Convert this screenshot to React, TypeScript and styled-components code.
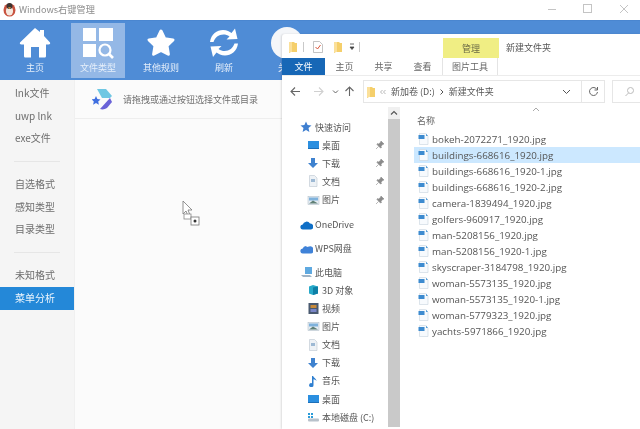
import { FC, ReactNode } from 'react'
import styled, { createGlobalStyle } from 'styled-components'

const FONT = '"Noto Sans CJK SC", "Noto Sans", sans-serif'

const GlobalStyle = createGlobalStyle`
  html, body {
    margin: 0;
    padding: 0;
    background: #fff;
    overflow: hidden;
  }
  body {
    font-family: ${FONT};
  }
`

const Page = styled.div`
  position: relative;
  width: 640px;
  height: 429px;
  overflow: hidden;
  display: flex;
  flex-direction: column;
  background: #fbfbfb;
  filter: blur(0.45px);
`

/* title bar */
const TitleBar = styled.header`
  height: 20px;
  flex: none;
  display: flex;
  align-items: center;
  padding: 0 11px 2px 3px;
  box-sizing: border-box;
  background: #fff;
`

const TitleText = styled.span`
  margin-left: 3px;
  font-size: 9.2px;
  color: #8c8c8c;
  flex: 1;
`

const WindowControls = styled.div`
  display: flex;
  align-items: center;
  gap: 26px;
`

/* blue toolbar */
const Toolbar = styled.nav`
  height: 60px;
  flex: none;
  display: flex;
  gap: 9px;
  padding: 2px 0 0 8px;
  box-sizing: border-box;
  background: #4f8cd6;
  border-top: 1px solid #4a86d0;
`

const ToolButton = styled.div<{ $active?: boolean }>`
  width: 54px;
  height: 55px;
  display: flex;
  flex-direction: column;
  align-items: center;
  justify-content: flex-end;
  gap: 1px;
  padding-bottom: 2px;
  box-sizing: border-box;
  font-size: 9px;
  line-height: 16px;
  color: #e6effa;
  background: ${p => (p.$active ? '#94b8e6' : 'transparent')};
`

const IconSlot = styled.div`
  height: 33px;
  display: flex;
  align-items: center;
  justify-content: center;
`

const RoundIcon = styled.div`
  width: 32px;
  height: 32px;
  border-radius: 50%;
  background: #f4f6f9;
`

const Body = styled.div`
  flex: 1;
  display: flex;
  min-height: 0;
`

/* left menu */
const Sidebar = styled.aside`
  width: 74px;
  flex: none;
  padding-top: 2px;
  box-sizing: border-box;
  background: #f5f5f5;
`

const SideItem = styled.div<{ $active?: boolean }>`
  height: 22.7px;
  line-height: 22.7px;
  padding-left: 15px;
  font-size: 10px;
  color: ${p => (p.$active ? '#eef6fd' : '#6e6e6e')};
  background: ${p => (p.$active ? '#2488d8' : 'transparent')};
`

const SideDivider = styled.div`
  height: 1px;
  margin: 11px 14px 11px 14px;
  background: #e6e6e6;
`

const Content = styled.main`
  flex: 1;
  position: relative;
  border-left: 1px solid #f0f0f0;
`

const DropHint = styled.div`
  height: 38px;
  display: flex;
  align-items: center;
  gap: 10px;
  padding-left: 17px;
  border-bottom: 1px solid #eeeeee;
  font-size: 9px;
  color: #6f6f6f;
`

const DragCursor = styled.svg`
  position: absolute;
  left: 107px;
  top: 120px;
`

/* explorer window lying over the app */
const Explorer = styled.section`
  position: absolute;
  left: 282px;
  top: 34px;
  right: 0;
  bottom: 0;
  display: flex;
  flex-direction: column;
  background: #fff;
  box-shadow: -1px 0 2px rgba(0, 0, 0, 0.12);
  border-radius: 3px 0 0 0;
`

const QuickBar = styled.div`
  height: 24px;
  flex: none;
  display: flex;
  align-items: center;
  padding: 2px 0 0 7px;
  box-sizing: border-box;
`

const QuickSep = styled.span<{ $left: number; $right: number }>`
  width: 1px;
  height: 10px;
  margin: 0 ${p => p.$right}px 0 ${p => p.$left}px;
  background: #c9c9c9;
`

const QuickGap = styled.span<{ $width: number }>`
  width: ${p => p.$width}px;
  flex: none;
`

const ManageTab = styled.div`
  width: 56px;
  height: 20px;
  margin-left: 83px;
  align-self: flex-end;
  display: flex;
  align-items: center;
  justify-content: center;
  background: #f0ee84;
  font-size: 9px;
  color: #6a6a45;
`

const WindowName = styled.span`
  margin-left: 7px;
  font-size: 9px;
  color: #555;
`

const RibbonTabs = styled.div`
  height: 17px;
  flex: none;
  display: flex;
  border-bottom: 1px solid #ececec;
  font-size: 9px;
  color: #666;
`

const RibbonTab = styled.div<{ $width: number; $kind?: 'file' | 'tool' }>`
  width: ${p => p.$width}px;
  display: flex;
  align-items: center;
  justify-content: center;
  color: ${p => (p.$kind === 'file' ? '#fff' : '#666')};
  background: ${p => (p.$kind === 'file' ? '#1767b6' : 'transparent')};
  border-left: ${p => (p.$kind === 'tool' ? '1px solid #e4e4e4' : 'none')};
  border-right: ${p => (p.$kind === 'tool' ? '1px solid #e4e4e4' : 'none')};
  box-sizing: border-box;
`

const AddressRow = styled.div`
  height: 31px;
  flex: none;
  display: flex;
  align-items: center;
  padding-left: 8px;
`

const NavGlyphs = styled.div`
  width: 73px;
  flex: none;
  display: flex;
  align-items: center;
`

const AddressBox = styled.div`
  width: 219px;
  height: 23px;
  flex: none;
  display: flex;
  align-items: center;
  gap: 4px;
  padding: 0 10px 0 3px;
  box-sizing: border-box;
  border: 1px solid #e6e6e6;
  font-size: 9px;
  color: #555;
`

const CrumbLast = styled.span`
  flex: 1;
`

const RefreshBox = styled.div`
  width: 23px;
  height: 23px;
  flex: none;
  display: flex;
  align-items: center;
  justify-content: center;
  box-sizing: border-box;
  border: 1px solid #e6e6e6;
  border-left: none;
`

const SearchBox = styled.div`
  flex: 1;
  height: 23px;
  margin-left: 7px;
  display: flex;
  align-items: center;
  padding-left: 11px;
  box-sizing: border-box;
  border: 1px solid #e6e6e6;
  border-right: none;
`

const Panes = styled.div`
  flex: 1;
  display: flex;
  min-height: 0;
`

const NavPane = styled.div`
  width: 106px;
  flex: none;
  padding-top: 11px;
  font-size: 9px;
  color: #555;
`

const NavRow = styled.div<{ $indent: number; $gap?: number }>`
  height: 18.15px;
  margin-top: ${p => p.$gap ?? 0}px;
  display: flex;
  align-items: center;
  gap: 2px;
  padding-left: ${p => p.$indent}px;
  white-space: nowrap;
`

const NavLabel = styled.span`
  flex: 1;
`

const PinSlot = styled.span`
  width: 13px;
  display: flex;
`

const Scrollbar = styled.div`
  width: 12px;
  flex: none;
  margin-bottom: 2px;
  background: #c9c9c9;
`

const ScrollUp = styled.div`
  height: 12px;
  display: flex;
  align-items: center;
  justify-content: center;
  background: #f0f0f0;
`

const ListPane = styled.div`
  flex: 1;
  position: relative;
  min-width: 0;
`

const SortMark = styled.svg`
  position: absolute;
  left: 132px;
  top: 0;
`

const ColumnHead = styled.div`
  height: 24px;
  padding: 2px 0 0 17px;
  display: flex;
  align-items: center;
  box-sizing: border-box;
  font-size: 9px;
  color: #666;
`

const FileRow = styled.div<{ $selected?: boolean }>`
  height: 16px;
  margin-left: 14px;
  display: flex;
  align-items: center;
  gap: 3px;
  padding-left: 4px;
  font-family: 'Open Sans', sans-serif;
  font-size: 9.8px;
  color: #555;
  white-space: nowrap;
  background: ${p => (p.$selected ? '#cce8ff' : 'transparent')};
`

/* drawings */
const AppLogo: FC = () => (
  <svg width="13" height="15" viewBox="0 0 13 15">
    <ellipse cx="6.5" cy="8" rx="6" ry="6.6" fill="#c8523f" />
    <ellipse cx="6.5" cy="9" rx="3.6" ry="4.6" fill="#f6e9df" />
    <circle cx="6.5" cy="4" r="3" fill="#3b3330" />
    <path d="M5 5.2h3L6.5 7z" fill="#e6a23c" />
  </svg>
)

const HomeIcon: FC = () => (
  <svg width="32" height="32" viewBox="0 0 32 32" fill="#fff">
    <path d="M16 1 1 15.5c-.6 1 .2 2 1.500 2H5V29c0 1 .7 1.500 1.500 1.500H12V20h8v10.500h5.500c.8 0 1.500-.5 1.500-1.500V17.500h2.500c1.300 0 2.100-1 1.500-2L25 9V3h-4v2z" />
  </svg>
)

const TypeIcon: FC = () => (
  <svg width="32" height="32" viewBox="0 0 32 32" fill="#fff">
    <rect x="1" y="1" width="13" height="13" />
    <rect x="17" y="1" width="14" height="13" />
    <rect x="1" y="17" width="13" height="13" />
    <circle cx="23" cy="23" r="5.500" fill="none" stroke="#fff" strokeWidth="2.200" />
    <path d="m27 27 4 4" stroke="#fff" strokeWidth="2.600" />
  </svg>
)

const StarIcon: FC = () => (
  <svg width="30" height="30" viewBox="0 0 30 30" fill="#fff" stroke="#fff" strokeWidth="3" strokeLinejoin="round">
    <path d="m15 3 3.700 7.700 8.300 1.200-6 5.900 1.400 8.400L15 22.300 7.600 26.200 9 17.800l-6-5.900 8.300-1.200z" />
  </svg>
)

const RefreshIcon: FC = () => (
  <svg width="30" height="32" viewBox="0 0 30 32" fill="#fff">
    <path d="M1 15C2 7 8 3 14 3c4 0 6.500 1.500 8.500 3L26 1.500 28.500 12 17.500 12.500 20.500 9.500C18.500 8 16.500 7.500 14.500 7.500 9.500 7.500 6 10.500 4.500 15z" />
    <path d="M29 16.500C28 24.500 22 28.500 16 28.500c-4 0-6.500-1.500-8.500-3L4 30 1.500 19.500 12.500 19 9.500 22c2 1.500 4 2 6 2 5 0 8.500-3 10-7.500z" />
  </svg>
)

const DropLogo: FC = () => (
  <svg width="21" height="22" viewBox="0 0 21 22">
    <path d="M5 1h9l6 7-2 2H10z" fill="#6fc7e3" />
    <path d="M18 10 8 21c3 1 5 0 7-1l5-6z" fill="#6a63d8" />
    <path d="M4 8l1.400 3 3.100.4-2.300 2.100.7 3.200L4 15.100 1.100 16.700l.7-3.200L-.5 11.400l3.100-.4z" fill="#3f6fe0" />
  </svg>
)

const Folder: FC = () => (
  <svg width="8" height="12" viewBox="0 0 8 12">
    <path d="M0 1h5l1 1h2v9H2L0 12z" fill="#f5cf6b" />
    <path d="M0 1h3v10H0z" fill="#fbe09a" />
  </svg>
)

const SmallSvg = styled.svg`
  flex: none;
`

const Small: FC<{ children: ReactNode; w?: number; h?: number }> = ({ children, w = 12, h = 12 }) => (
  <SmallSvg width={w} height={h} viewBox={`0 0 ${w} ${h}`}>
    {children}
  </SmallSvg>
)

const ArrowSvg = styled.svg<{ $turn: number }>`
  transform: rotate(${p => p.$turn}deg);
`

const Arrow: FC<{ color: string; turn?: number }> = ({ color, turn = 0 }) => (
  <ArrowSvg $turn={turn} width="11" height="11" viewBox="0 0 11 11" fill="none" stroke={color} strokeWidth="1.100">
    <path d="M10 5.500H1M5 1.500l-4 4 4 4" />
  </ArrowSvg>
)

const NAV_ICONS: Record<string, ReactNode> = {
  star: <path d="m6 .5 1.600 3.600 3.900.4-3 2.600.9 3.900L6 9l-3.400 2 .9-3.900-3-2.600 3.900-.4z" fill="#3f7fd0" />,
  desk: (
    <>
      <rect x="1" y="2" width="11" height="8" fill="#2b8fe0" />
      <rect x="1" y="9" width="11" height="1" fill="#1d6fb8" />
    </>
  ),
  down: <path d="M4 1h4v5h3L6 11 1 6h3z" fill="#3f82cf" />,
  doc: (
    <>
      <path d="M2.500.5h5l2.500 2.500v8.500H2.500z" fill="#eef2f6" stroke="#bcc6d0" strokeWidth=".6" />
      <rect x="4" y="4" width="4" height="3" fill="#9db9d4" />
    </>
  ),
  pic: (
    <>
      <rect x="1" y="2.500" width="11" height="8" fill="#e6edf3" stroke="#a9b7c4" strokeWidth=".5" />
      <rect x="2" y="3.500" width="9" height="3" fill="#7fb2dc" />
      <path d="M2 9.500 6 6.500l5 3z" fill="#5f7f75" />
    </>
  ),
  cloud: <path d="M3 10.500a2.500 2.500 0 0 1-.3-5A4 4 0 0 1 10 4.600a3 3 0 0 1 1 5.900z" fill="#0f6fc6" />,
  wps: <path d="M3 10.500a2.500 2.500 0 0 1-.3-5A3.500 3.500 0 0 1 6 3l1 1 2-.5a3 3 0 0 1 2 7z" fill="#3f82d8" />,
  pc: (
    <>
      <path d="M5 1h7v7H5z" fill="#5fa9e0" />
      <path d="M1 9h9l2 2H3z" fill="#9fb4c6" />
    </>
  ),
  cube: (
    <>
      <path d="M2 2.500 6 1l5 1.500v7L6 11 2 9.500z" fill="#27a9c9" />
      <path d="M6 3.500 11 2.500v7L6 11z" fill="#0d7fa6" />
    </>
  ),
  video: (
    <>
      <rect x="1.500" y="1" width="10" height="11" fill="#4a5a70" />
      <rect x="3.500" y="3" width="6" height="3" fill="#c88a3a" />
      <rect x="3.500" y="7" width="6" height="3" fill="#7a86c8" />
    </>
  ),
  music: <path d="M5 1h1.200c.4 2 3.300 2.600 3.300 5-.8-1-2-1.500-3-1.700V10a2.200 2 0 1 1-1.500-1.800z" fill="#2f7fd0" />,
  disk: (
    <>
      <rect x="1" y="7.500" width="11" height="3" rx="1" fill="#b8c2cb" />
      <rect x="1" y="2" width="2" height="2" fill="#2b9bd8" />
      <rect x="4" y="2" width="2" height="2" fill="#2b9bd8" />
      <rect x="1" y="5" width="2" height="2" fill="#2b9bd8" />
      <rect x="4" y="5" width="2" height="2" fill="#2b9bd8" />
    </>
  ),
}

const Pin: FC = () => (
  <Small w={10} h={10}>
    <path d="M6 1 9 4 7.500 4.500 6 6.500 6.500 7.500 5.500 8 2 4.500 2.500 3.500 3.500 4 5.500 2.500zM3.500 6.500 1 9" fill="#8a8a8a" stroke="#8a8a8a" strokeWidth=".6" />
  </Small>
)

const FileIcon: FC = () => (
  <Small w={11} h={12}>
    <path d="M1.500.5h6L10 3v8.500H1.500z" fill="#f7fafd" stroke="#c8d4de" strokeWidth=".6" />
    <rect x="0.500" y="2" width="6" height="4" fill="#3d8bd0" />
    <path d="M8 .5v2.500h2" fill="#5aa0d8" />
  </Small>
)

type NavEntry = { icon: string; label: string; indent: number; pin?: boolean; gap?: number }

const NAV: NavEntry[] = [
  { icon: 'star', label: '快速访问', indent: 18 },
  { icon: 'desk', label: '桌面', indent: 25, pin: true },
  { icon: 'down', label: '下载', indent: 25, pin: true },
  { icon: 'doc', label: '文档', indent: 25, pin: true },
  { icon: 'pic', label: '图片', indent: 25, pin: true },
  { icon: 'cloud', label: 'OneDrive', indent: 18, gap: 7 },
  { icon: 'wps', label: 'WPS网盘', indent: 18, gap: 6 },
  { icon: 'pc', label: '此电脑', indent: 18, gap: 5 },
  { icon: 'cube', label: '3D 对象', indent: 25 },
  { icon: 'video', label: '视频', indent: 25 },
  { icon: 'pic', label: '图片', indent: 25 },
  { icon: 'doc', label: '文档', indent: 25 },
  { icon: 'down', label: '下载', indent: 25 },
  { icon: 'music', label: '音乐', indent: 25 },
  { icon: 'desk', label: '桌面', indent: 25 },
  { icon: 'disk', label: '本地磁盘 (C:)', indent: 25 },
]

const FILES = [
  'bokeh-2072271_1920.jpg',
  'buildings-668616_1920.jpg',
  'buildings-668616_1920-1.jpg',
  'buildings-668616_1920-2.jpg',
  'camera-1839494_1920.jpg',
  'golfers-960917_1920.jpg',
  'man-5208156_1920.jpg',
  'man-5208156_1920-1.jpg',
  'skyscraper-3184798_1920.jpg',
  'woman-5573135_1920.jpg',
  'woman-5573135_1920-1.jpg',
  'woman-5779323_1920.jpg',
  'yachts-5971866_1920.jpg',
]

const SIDE_GROUPS = [
  ['lnk文件', 'uwp lnk', 'exe文件'],
  ['自选格式', '感知类型', '目录类型'],
  ['未知格式', '菜单分析'],
]

const App: FC = () => (
  <Page>
    <GlobalStyle />
    <TitleBar>
      <AppLogo />
      <TitleText>Windows右键管理</TitleText>
      <WindowControls>
        <svg width="10" height="10" viewBox="0 0 10 10" stroke="#c4c4c4" fill="none">
          <path d="M1 5.500h8" />
        </svg>
        <svg width="10" height="10" viewBox="0 0 10 10" stroke="#c4c4c4" fill="none">
          <rect x=".5" y=".5" width="8" height="8" />
        </svg>
        <svg width="10" height="10" viewBox="0 0 10 10" stroke="#c4c4c4" fill="none">
          <path d="m1 1 8 8M9 1 1 9" />
        </svg>
      </WindowControls>
    </TitleBar>

    <Toolbar>
      <ToolButton>
        <IconSlot><HomeIcon /></IconSlot>主页
      </ToolButton>
      <ToolButton $active>
        <IconSlot><TypeIcon /></IconSlot>文件类型
      </ToolButton>
      <ToolButton>
        <IconSlot><StarIcon /></IconSlot>其他规则
      </ToolButton>
      <ToolButton>
        <IconSlot><RefreshIcon /></IconSlot>刷新
      </ToolButton>
      <ToolButton>
        <IconSlot><RoundIcon /></IconSlot>关于
      </ToolButton>
    </Toolbar>

    <Body>
      <Sidebar>
        {SIDE_GROUPS.map((group, i) => (
          <div key={group[0]}>
            {i > 0 && <SideDivider />}
            {group.map(item => (
              <SideItem key={item} $active={item === '菜单分析'}>
                {item}
              </SideItem>
            ))}
          </div>
        ))}
      </Sidebar>
      <Content>
        <DropHint>
          <DropLogo />
          请拖拽或通过按钮选择文件或目录
        </DropHint>
        <DragCursor width="20" height="26" viewBox="0 0 20 26">
          <path d="M1 1v13l3-3 2 5 2-1-2-5h4z" fill="#fff" stroke="#777" strokeWidth=".8" />
          <rect x="2" y="14" width="7" height="5" fill="#fff" stroke="#888" strokeWidth=".8" />
          <rect x="9" y="17" width="8" height="8" fill="#fff" stroke="#777" strokeWidth=".8" />
          <circle cx="13" cy="21" r="1.500" fill="#333" />
        </DragCursor>
      </Content>
    </Body>

    <Explorer>
      <QuickBar>
        <Folder />
        <QuickSep $left={6} $right={9} />
        <Small w={10} h={12}>
          <path d="M.5.500h6l3 3v8h-9z" fill="#fff" stroke="#aaa" strokeWidth=".7" />
          <path d="m2.500 6 2 2 3-4" fill="none" stroke="#d9553a" strokeWidth="1" />
        </Small>
        <QuickGap $width={11} />
        <Folder />
        <QuickGap $width={7} />
        <Small w={6} h={8}>
          <path d="M1 1h4M1 4h4l-2 2.500z" stroke="#444" strokeWidth=".8" fill="#444" />
        </Small>
        <QuickSep $left={4} $right={0} />
        <ManageTab>管理</ManageTab>
        <WindowName>新建文件夹</WindowName>
      </QuickBar>

      <RibbonTabs>
        <RibbonTab $width={43} $kind="file">文件</RibbonTab>
        <RibbonTab $width={39}>主页</RibbonTab>
        <RibbonTab $width={39}>共享</RibbonTab>
        <RibbonTab $width={39}>查看</RibbonTab>
        <RibbonTab $width={56} $kind="tool">图片工具</RibbonTab>
      </RibbonTabs>

      <AddressRow>
        <NavGlyphs>
          <Arrow color="#666" />
          <QuickGap $width={12} />
          <Arrow color="#d0d0d0" turn={180} />
          <QuickGap $width={8} />
          <Small w={7} h={6}>
            <path d="m1 1.500 2.500 2.500L6 1.500" fill="none" stroke="#666" />
          </Small>
          <QuickGap $width={5} />
          <Arrow color="#666" turn={90} />
        </NavGlyphs>
        <AddressBox>
          <Folder />
          <Small w={8} h={8}>
            <path d="M3.500 2 1.500 4l2 2M6.500 2l-2 2 2 2" fill="none" stroke="#999" strokeWidth=".7" />
          </Small>
          <span>新加卷 (D:)</span>
          <Small w={6} h={8}>
            <path d="m1.500 1.500 2.500 2.500-2.500 2.500" fill="none" stroke="#555" />
          </Small>
          <CrumbLast>新建文件夹</CrumbLast>
          <Small w={9} h={6}>
            <path d="m1 1 3.500 3.500L8 1" fill="none" stroke="#555" />
          </Small>
        </AddressBox>
        <RefreshBox>
          <Small w={11} h={11}>
            <path d="M9 3.500A4 4 0 1 0 9.500 6M9.500 1v3h-3" fill="none" stroke="#666" />
          </Small>
        </RefreshBox>
        <SearchBox>
          <Small w={11} h={11}>
            <circle cx="6.500" cy="4.500" r="3" fill="none" stroke="#bbb" />
            <path d="M4.500 7 1.500 10" stroke="#bbb" />
          </Small>
        </SearchBox>
      </AddressRow>

      <Panes>
        <NavPane>
          {NAV.map(entry => (
            <NavRow key={entry.icon + entry.label + entry.indent} $indent={entry.indent} $gap={entry.gap}>
              <Small w={13}>{NAV_ICONS[entry.icon]}</Small>
              <NavLabel>{entry.label}</NavLabel>
              {entry.pin && (
                <PinSlot>
                  <Pin />
                </PinSlot>
              )}
            </NavRow>
          ))}
        </NavPane>
        <Scrollbar>
          <ScrollUp>
            <Small w={8} h={6}>
              <path d="m1 4.500 3-3 3 3" fill="none" stroke="#555" strokeWidth="1.100" />
            </Small>
          </ScrollUp>
        </Scrollbar>
        <ListPane>
          <SortMark width="8" height="5" viewBox="0 0 8 5">
            <path d="m1 4 3-3 3 3" fill="none" stroke="#aaa" />
          </SortMark>
          <ColumnHead>名称</ColumnHead>
          {FILES.map((file, i) => (
            <FileRow key={file} $selected={i === 1}>
              <FileIcon />
              {file}
            </FileRow>
          ))}
        </ListPane>
      </Panes>
    </Explorer>
  </Page>
)

export default App
